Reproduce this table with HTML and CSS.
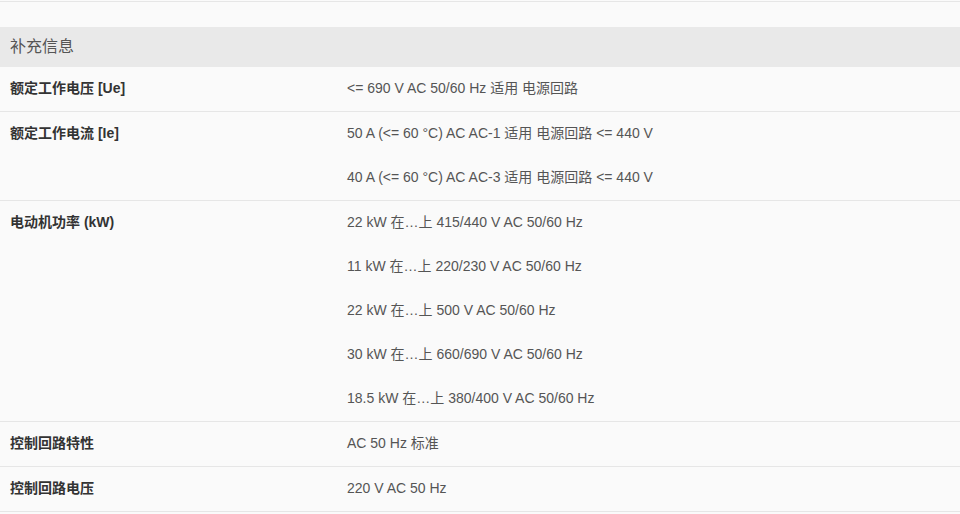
FILE: index.html
```html
<!DOCTYPE html>
<html lang="zh-CN">
<head>
    <meta charset="UTF-8">
    <meta name="viewport" content="width=device-width, initial-scale=1.0">
    <title>补充信息</title>
    <link rel="stylesheet" href="styles.css">
</head>
<body>
    <div class="top-rule"></div>

    <div class="spec-block">
        <div class="spec-title">补充信息</div>

        <div class="spec-row">
            <div class="spec-label">额定工作电压 [Ue]</div>
            <div class="spec-values">
                <div class="spec-value">&lt;= 690 V AC 50/60 Hz 适用 电源回路</div>
            </div>
        </div>

        <div class="spec-row">
            <div class="spec-label">额定工作电流 [Ie]</div>
            <div class="spec-values">
                <div class="spec-value">50 A (&lt;= 60 °C) AC AC-1 适用 电源回路 &lt;= 440 V</div>
                <div class="spec-value">40 A (&lt;= 60 °C) AC AC-3 适用 电源回路 &lt;= 440 V</div>
            </div>
        </div>

        <div class="spec-row">
            <div class="spec-label">电动机功率 (kW)</div>
            <div class="spec-values">
                <div class="spec-value">22 kW 在…上 415/440 V AC 50/60 Hz</div>
                <div class="spec-value">11 kW 在…上 220/230 V AC 50/60 Hz</div>
                <div class="spec-value">22 kW 在…上 500 V AC 50/60 Hz</div>
                <div class="spec-value">30 kW 在…上 660/690 V AC 50/60 Hz</div>
                <div class="spec-value">18.5 kW 在…上 380/400 V AC 50/60 Hz</div>
            </div>
        </div>

        <div class="spec-row">
            <div class="spec-label">控制回路特性</div>
            <div class="spec-values">
                <div class="spec-value">AC 50 Hz 标准</div>
            </div>
        </div>

        <div class="spec-row">
            <div class="spec-label">控制回路电压</div>
            <div class="spec-values">
                <div class="spec-value">220 V AC 50 Hz</div>
            </div>
        </div>
    </div>
</body>
</html>
```

FILE: styles.css
```css
body {
    margin: 0;
    background: #fafafa;
    font-family: "Liberation Sans", Arial, "Noto Sans CJK SC", sans-serif;
    color: #555;
}

.top-rule {
    height: 1px;
    margin-top: 1px;
    background: #e6e6e6;
}

.spec-block {
    margin-top: 25px;
}

.spec-title {
    background: #e9e9e9;
    height: 40px;
    line-height: 40px;
    padding-left: 10px;
    font-size: 16px;
    color: #555;
}

.spec-row {
    display: grid;
    grid-template-columns: 337px 1fr;
    border-bottom: 1px solid #e6e6e6;
}

.spec-label {
    padding: 11px 10px 13px;
    line-height: 20px;
    font-size: 14px;
    font-weight: bold;
    color: #333;
}

.spec-value {
    padding: 11px 10px 13px;
    line-height: 20px;
    font-size: 14px;
    color: #555;
}
```
